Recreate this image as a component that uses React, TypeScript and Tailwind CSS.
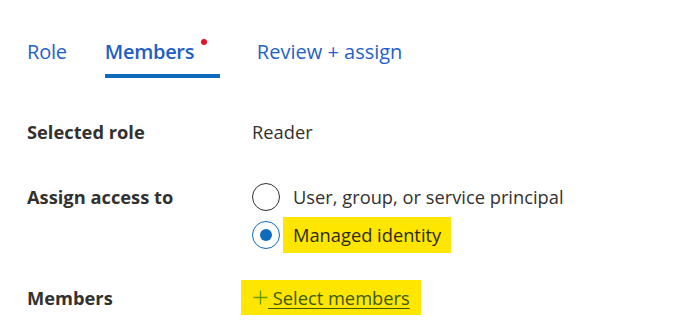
import React from "react";

export default function App() {
  return (
    <div
      className="w-[696px] h-[334px] bg-white overflow-hidden text-[#323130]"
      style={{ fontFamily: '"Open Sans", "Noto Sans", sans-serif' }}
    >
      {/* Tabs */}
      <div className="flex items-end pl-[27px] pt-[38px] h-[78px]">
        <div className="text-[20px] leading-[28px] text-[#1f62c7] pb-[12px] tracking-[-0.2px]">Role</div>
        <div className="relative ml-[38px] flex w-[115px] border-b-[4px] border-[#0f6cbd] pb-[8px]">
          <span className="text-[20px] leading-[28px] font-semibold text-[#1e5ec4] tracking-[-0.3px]">Members</span>
          <span className="absolute left-[96px] top-[1px] w-[6px] h-[6px] rounded-full bg-[#e81123]" />
        </div>
        <div className="ml-[37px] text-[20px] leading-[28px] text-[#1f62c7] pb-[12px]">Review + assign</div>
      </div>

      {/* Form */}
      <div className="pl-[27px] pt-[42px] flex flex-col text-[18.3px]">
        <div className="flex items-center h-[24px]">
          <div className="w-[225px] font-bold">Selected role</div>
          <div>Reader</div>
        </div>

        <div className="flex mt-[39px]">
          <div className="w-[225px] font-bold h-[28px] flex items-center">Assign access to</div>
          <div className="flex flex-col gap-[10px]">
            <div className="flex items-center h-[28px]">
              <span className="w-[28px] h-[28px] rounded-full border-[1.5px] border-[#323130] box-border" />
              <span className="ml-[13px]">User, group, or service principal</span>
            </div>
            <div className="flex items-center h-[28px]">
              <span className="w-[28px] h-[28px] rounded-full border-[1.5px] border-[#0f6cbd] box-border flex items-center justify-center">
                <span className="w-[12px] h-[12px] rounded-full bg-[#0f6cbd]" />
              </span>
              <span className="ml-[3px] bg-[#ffe600] px-[10px] h-[36px] flex items-center text-[#2b2b1a]">
                Managed identity
              </span>
            </div>
          </div>
        </div>

        <div className="flex items-center mt-[31px]">
          <div className="w-[214px] font-bold">Members</div>
          <div className="bg-[#ffe600] h-[35px] pl-[12px] pr-[11px] flex items-center text-[#3b5a00]">
            <svg width="15" height="15" viewBox="0 0 15 15" className="mt-[-1px]">
              <path d="M7.5 0.5V14.5M0.5 7.5H14.5" stroke="#6d9a00" strokeWidth="1.4" fill="none" />
            </svg>
            <span className="underline underline-offset-[3px] decoration-[1px]">&nbsp;Select members</span>
          </div>
        </div>
      </div>
    </div>
  );
}
